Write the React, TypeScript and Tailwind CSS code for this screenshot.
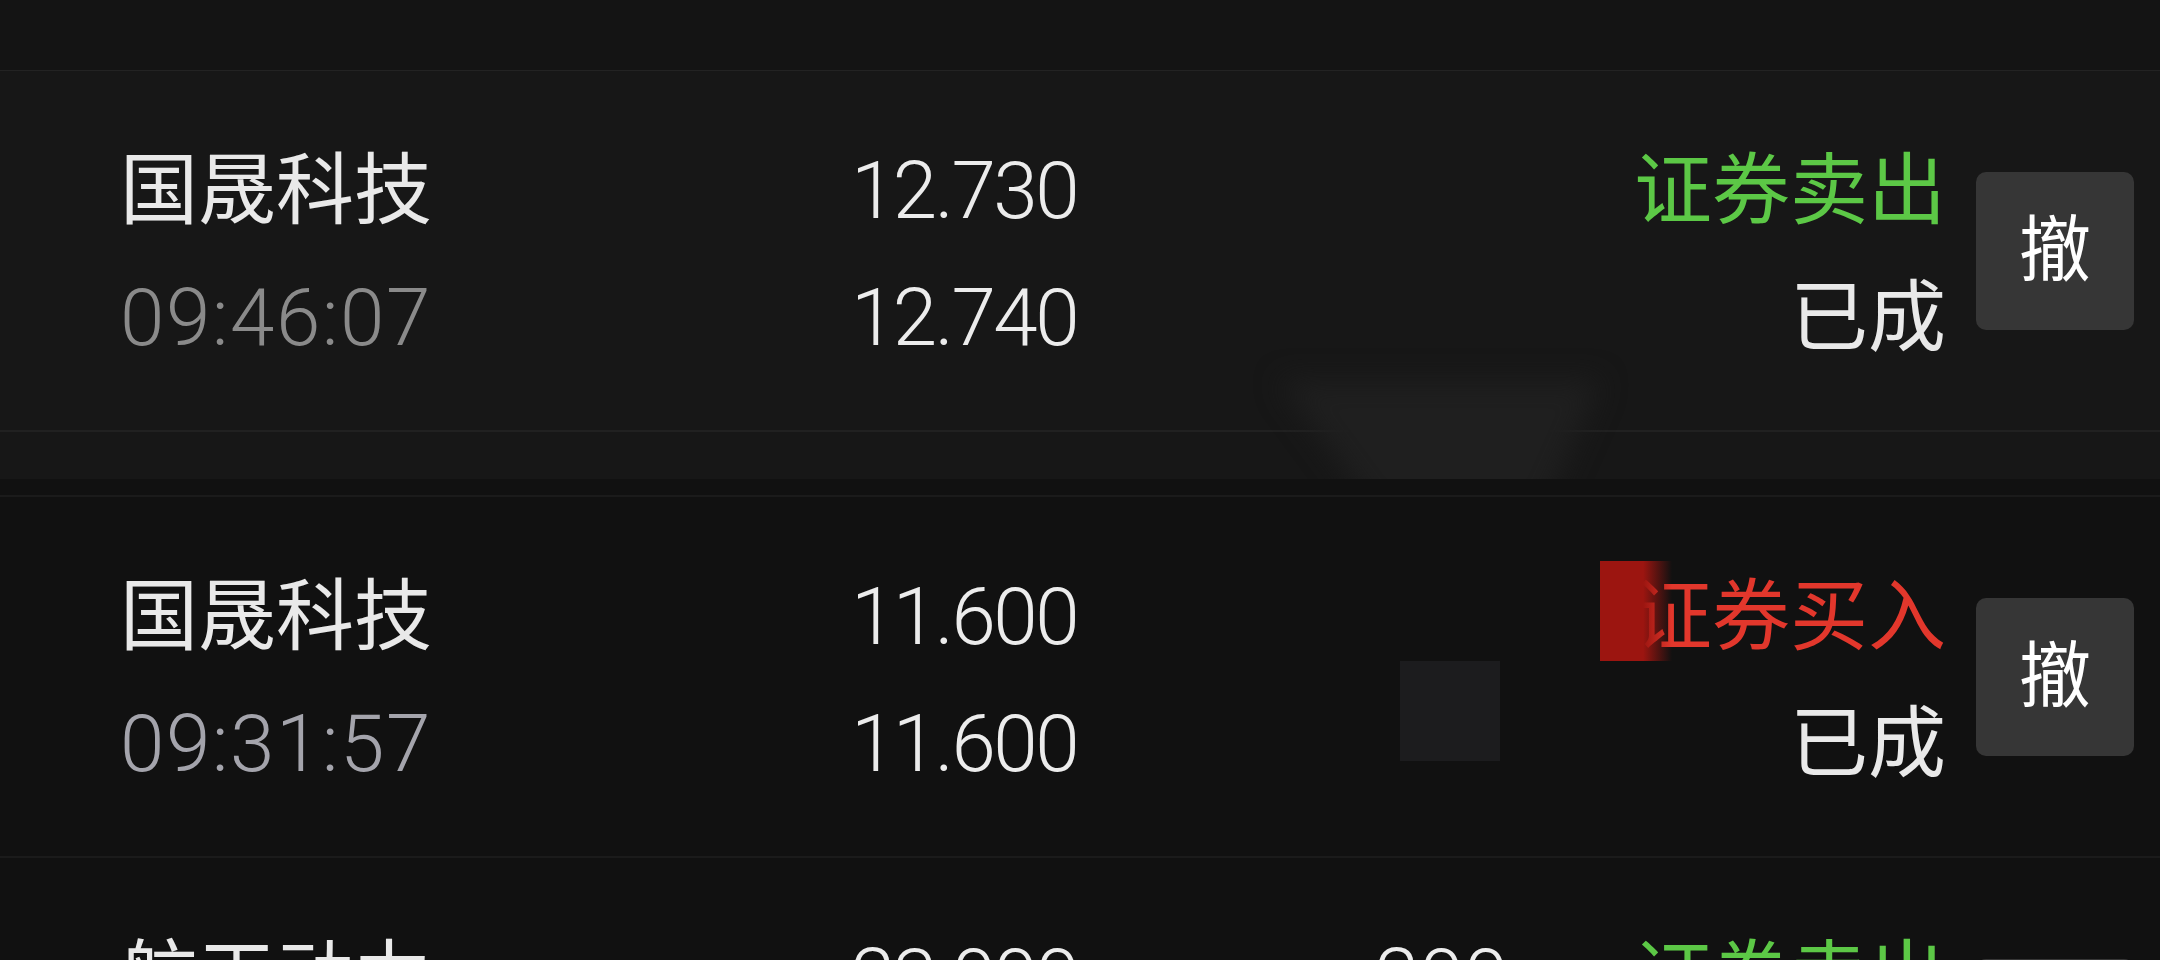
import React from "react";

type Row = {
  name: string;
  time: string;
  price1: string;
  price2: string;
  qty?: string;
  side: string;
  sideColor: string;
  timeColor: string;
  status: string;
};

const rows: Row[] = [
  {
    name: "国晟科技",
    time: "09:46:07",
    price1: "12.730",
    price2: "12.740",
    side: "证券卖出",
    sideColor: "text-[#5cc846]",
    timeColor: "text-[#8a8a8a]",
    status: "已成",
  },
  {
    name: "国晟科技",
    time: "09:31:57",
    price1: "11.600",
    price2: "11.600",
    side: "证券买入",
    sideColor: "text-[#e2372c]",
    timeColor: "text-[#a4a4ac]",
    status: "已成",
  },
  {
    name: "航天动力",
    time: "09:30:12",
    price1: "23.000",
    price2: "23.000",
    qty: "200",
    side: "证券卖出",
    sideColor: "text-[#5cc846]",
    timeColor: "text-[#8a8a8a]",
    status: "已成",
  },
];

function OrderRow({ r, children }: { r: Row; children?: React.ReactNode }) {
  return (
    <div className="relative flex h-[359px] shrink-0 items-center pl-[120px] pr-[26px]">
      {children}
      <div className="relative flex w-full items-center pt-[8px]">
        <div className="flex w-[504px] flex-col">
          <div className="h-[127px] text-[78px] leading-[127px] text-[#e9e9e9]">{r.name}</div>
          <div className={`h-[127px] text-[80px] font-light leading-[127px] tracking-[1.5px] ${r.timeColor}`}>{r.time}</div>
        </div>
        <div className="mr-[1px] flex w-[453px] flex-col items-end">
          <div className="h-[127px] text-[80px] font-light leading-[127px] tracking-[-2.5px] text-[#ececec]">{r.price1}</div>
          <div className="h-[127px] text-[80px] font-light leading-[127px] tracking-[-2.5px] text-[#ececec]">{r.price2}</div>
        </div>
        <div className="flex w-[430px] flex-col items-end">
          <div className="h-[127px] text-[80px] font-light leading-[127px] text-[#ececec]">{r.qty ?? ""}</div>
          <div className="h-[127px]" />
        </div>
        <div className="flex flex-1 flex-col items-end">
          <div className={`h-[127px] text-[78px] leading-[127px] ${r.sideColor}`}>{r.side}</div>
          <div className="h-[127px] text-[78px] leading-[127px] text-[#e9e9e9]">{r.status}</div>
        </div>
        <div className="ml-[30px] -mt-[8px] flex h-[158px] w-[158px] items-center justify-center rounded-[10px] bg-[#363636] text-[72px] text-white">
          撤
        </div>
      </div>
    </div>
  );
}

export default function App() {
  return (
    <div
      className="relative h-[960px] w-[2160px] overflow-hidden bg-[#111111]"
      style={{ fontFamily: 'Roboto, "Noto Sans CJK SC", sans-serif' }}
    >
      <div className="h-[70px] bg-[#141414]" />
      <div className="h-px bg-[#232323]" />
      <div className="relative h-[408px] overflow-hidden bg-[#171717]">
        <OrderRow r={rows[0]} />
        <div className="h-[2px] bg-[#212121]" />
        <div className="absolute left-[1250px] top-[300px] h-[140px] w-[380px] blur-[14px]">
          <div className="mx-auto mt-[10px] h-[130px] w-[320px] bg-[#1f1f1f] [clip-path:polygon(0_0,100%_0,82%_100%,30%_100%)]" />
        </div>
      </div>
      <div className="h-[16px]" />
      <div className="h-[2px] bg-[#1b1b1b]" />
      <OrderRow r={rows[1]}>
        <div className="absolute left-[1400px] top-[164px] h-[100px] w-[100px] bg-[#1c1c1e]" />
        <div className="absolute left-[1600px] top-[64px] z-10 h-[100px] w-[72px] bg-[linear-gradient(to_right,#9c1510_0%,#9c1510_60%,rgba(156,21,16,0)_100%)]" />
      </OrderRow>
      <div className="h-[2px] bg-[#1b1b1b]" />
      <OrderRow r={rows[2]} />
    </div>
  );
}
